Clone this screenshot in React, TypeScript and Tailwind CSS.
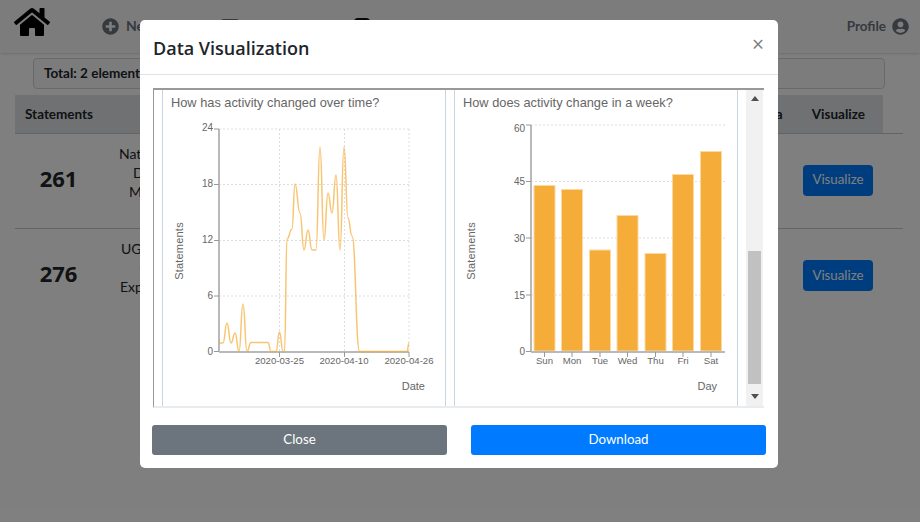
import { FaHome, FaPlusCircle, FaUserCircle } from "react-icons/fa";

const uiFont = "font-['Lato','Open_Sans',sans-serif]";
const titleFont = "font-['Open_Sans','Noto_Sans',sans-serif]";

const linePoints = [
  [219, 342], [223, 342], [227, 322], [231, 342], [235, 332], [239, 350.5], [243, 303], [247, 350.5],
  [251, 341.5], [268, 341.5], [271, 350.5], [276, 350.5], [279.5, 331], [283, 350.5], [284.5, 350.5],
  [287, 238], [292, 228], [295, 183], [300, 212], [304, 249], [308, 229], [312, 249], [316, 249],
  [320, 146], [324, 239], [328, 192], [332, 212], [336, 174], [340, 249], [344, 146], [348, 217],
  [352, 235], [359.5, 350.5], [407, 350.5], [409, 342],
];

// rounded peaks, control points sit halfway between neighbours
const linePath = linePoints.reduce((d, [x, y], i) => {
  if (i === 0) return `M${x} ${y}`;
  const [px, py] = linePoints[i - 1];
  const mid = (x - px) / 2;
  return `${d}C${px + mid} ${py} ${x - mid} ${y} ${x} ${y}`;
}, "");

const bars = [
  { day: "Sun", x: 534, top: 184.5 },
  { day: "Mon", x: 561.5, top: 188.5 },
  { day: "Tue", x: 589.5, top: 249 },
  { day: "Wed", x: 617, top: 214.5 },
  { day: "Thu", x: 645, top: 252.5 },
  { day: "Fri", x: 672.5, top: 173.5 },
  { day: "Sat", x: 700.5, top: 150.5 },
];

function ChartLabel({ x, y, children, anchor = "middle", size = 9.6 }: { x: number; y: number; children: string; anchor?: "middle" | "end" | "start"; size?: number }) {
  return (
    <text x={x} y={y} textAnchor={anchor} fontSize={size} fill="#666">
      {children}
    </text>
  );
}

function YLabel({ x }: { x: number }) {
  return (
    <text transform={`translate(${x} 250) rotate(-90)`} textAnchor="middle" fontSize={11} letterSpacing={0.2} fill="#666">
      Statements
    </text>
  );
}

function LineChart() {
  return (
    <svg viewBox="163 118 282 289" className="block h-[289px] w-[282px]">
      {[128, 183.5, 239.5, 295].map((y) => (
        <line key={y} x1={219} x2={409} y1={y} y2={y} stroke="#ddd" strokeDasharray="2 2" />
      ))}
      {[279.5, 344.5, 409].map((x) => (
        <line key={x} x1={x} x2={x} y1={128} y2={350} stroke="#ddd" strokeDasharray="2 2" />
      ))}
      <path d="M219 128V351M219 351H409" fill="none" stroke="#b9b9b9" strokeWidth={2} />
      {[128, 183.5, 239.5, 295, 350.5].map((y) => (
        <line key={y} x1={214} x2={219} y1={y} y2={y} stroke="#999" />
      ))}
      {[279.5, 344.5, 409].map((x) => (
        <line key={x} x1={x} x2={x} y1={351} y2={356} stroke="#999" />
      ))}
      <path d={linePath} fill="none" stroke="#f5ac38" strokeOpacity={0.7} strokeWidth={1.5} />
      <ChartLabel x={213} y={129.5} anchor="end" size={10}>24</ChartLabel>
      <ChartLabel x={213} y={186} anchor="end" size={10}>18</ChartLabel>
      <ChartLabel x={213} y={242} anchor="end" size={10}>12</ChartLabel>
      <ChartLabel x={213} y={298} anchor="end" size={10}>6</ChartLabel>
      <ChartLabel x={213} y={353.5} anchor="end" size={10}>0</ChartLabel>
      <ChartLabel x={279.5} y={363}>2020-03-25</ChartLabel>
      <ChartLabel x={344} y={363}>2020-04-10</ChartLabel>
      <ChartLabel x={409} y={363}>2020-04-26</ChartLabel>
      <ChartLabel x={425} y={389} anchor="end" size={11}>Date</ChartLabel>
      <YLabel x={183} />
    </svg>
  );
}

function BarChart() {
  return (
    <svg viewBox="455 118 282 289" className="block h-[289px] w-[282px]">
      {[124, 180.5, 237, 294].map((y) => (
        <line key={y} x1={531} x2={726} y1={y} y2={y} stroke="#ddd" strokeDasharray="2 2" />
      ))}
      {bars.map((b) => (
        <rect key={b.day} x={b.x} y={b.top} width={21} height={350 - b.top} fill="#f5ac38" stroke="#fbd9a3" />
      ))}
      <path d="M531 124V351M531 351H725" fill="none" stroke="#b9b9b9" strokeWidth={2} />
      {[124, 180.5, 237, 294, 350.5].map((y) => (
        <line key={y} x1={526} x2={531} y1={y} y2={y} stroke="#999" />
      ))}
      {bars.map((b) => (
        <line key={b.day} x1={b.x + 10.5} x2={b.x + 10.5} y1={351} y2={356} stroke="#999" />
      ))}
      <ChartLabel x={525} y={130.5} anchor="end" size={10}>60</ChartLabel>
      <ChartLabel x={525} y={184} anchor="end" size={10}>45</ChartLabel>
      <ChartLabel x={525} y={240.5} anchor="end" size={10}>30</ChartLabel>
      <ChartLabel x={525} y={297.5} anchor="end" size={10}>15</ChartLabel>
      <ChartLabel x={525} y={353.5} anchor="end" size={10}>0</ChartLabel>
      {bars.map((b) => (
        <ChartLabel key={b.day} x={b.x + 10.5} y={363}>{b.day}</ChartLabel>
      ))}
      <ChartLabel x={717} y={389} anchor="end" size={11}>Day</ChartLabel>
      <YLabel x={475} />
    </svg>
  );
}

function ChartPanel({ title, children }: { title: string; children: React.ReactNode }) {
  return (
    <div className="h-full w-[284px] shrink-0 overflow-hidden border-x border-[#c9d6df] font-['Liberation_Sans',sans-serif]">
      <p className="h-[29px] pl-2 pt-[5px] text-[12.8px] leading-4 text-[#666]">{title}</p>
      {children}
    </div>
  );
}

function Row({ count, lines, last }: { count: string; lines: { text: string; pad: string }[]; last?: boolean }) {
  return (
    <div className={last ? "flex h-[95px] items-center" : "flex h-[95px] items-center border-b border-[#c6c8ca]"}>
      <div className={`mb-[6px] w-[87px] text-center text-[22px] font-bold text-[#212529] ${titleFont}`}>{count}</div>
      <div className="ml-[17px] flex flex-col gap-[1px] self-start pt-[11px] text-sm leading-[18px] text-[#212529]">
        {lines.map((l) => (
          <p key={l.text} className={l.pad}>{l.text}</p>
        ))}
      </div>
      <button className="mb-[2px] ml-auto mr-[30px] h-[31px] w-[70px] rounded bg-[#007bff] text-[13.3px] text-white">Visualize</button>
    </div>
  );
}

export default function App() {
  return (
    <div className={`relative h-[522px] w-[920px] overflow-hidden bg-white ${uiFont}`}>
      <nav className="flex h-[53px] items-start bg-[#f8f9fa] text-[#6c757d] shadow-sm">
        <FaHome className="ml-[14px] mt-[6px] h-[32px] w-[36px] text-black" />
        <FaPlusCircle className="ml-[52px] mt-[18px] h-[17px] w-[17px]" />
        <span className="ml-[7px] mt-[16px] w-[30px] text-sm font-bold">New</span>
        <div className="ml-[64px] mt-[19px] h-4 w-5 rounded-sm bg-[#6c757d]" />
        <div className="ml-[114px] mt-[18px] h-4 w-4 rounded-sm bg-[#111]" />
        <span className="ml-auto mt-[16px] text-[13.5px] font-bold">Profile</span>
        <FaUserCircle className="ml-[6px] mr-[11px] mt-[18px] h-[17px] w-[17px]" />
      </nav>
      <div className="ml-[33px] mt-[5px] flex h-[31px] w-[852px] items-center rounded border border-[#ced4da] bg-[#f8f9fa] px-[10px] text-[13.5px] font-bold text-[#212529]">
        Total: 2 elements
      </div>
      <div className="ml-[15px] mr-[17px] mt-[6px]">
        <div className="border-b border-[#c6c8ca]">
          <div className="mr-[20px] flex h-[38px] items-center bg-[#dee2e6] pl-[10px] pr-[18px] text-[13.5px] font-bold text-[#212529]">
            <span>Statements</span>
            <span className="ml-auto">Data</span>
            <span className="ml-[29px]">Visualize</span>
          </div>
        </div>
        <Row
          count="261"
          lines={[
            { text: "Nat", pad: "pl-0" },
            { text: "D", pad: "pl-[14px]" },
            { text: "M", pad: "pl-[10px]" },
          ]}
        />
        <Row
          count="276"
          last
          lines={[
            { text: "UGI", pad: "pl-[2px]" },
            { text: "-", pad: "pl-[20px]" },
            { text: "Exp", pad: "pl-px" },
          ]}
        />
      </div>

      <div className="absolute inset-0 bg-black/50">
        <div className="ml-[140px] mt-[20px] flex h-[448px] w-[638px] flex-col rounded-[5px] bg-white">
          <div className={`flex h-[55px] shrink-0 items-start justify-between border-b border-[#dee2e6] px-[13px] ${titleFont}`}>
            <h5 className="mt-[13px] text-[18px] font-semibold leading-[30px] text-[#212529]">Data Visualization</h5>
            <span className="mr-px mt-[10px] text-[21px] leading-7 text-[#808080]">×</span>
          </div>
          <div className="ml-[13px] mt-[13px] flex h-[320px] w-[611px] border-b-2 border-l border-t-2 border-[#999] border-b-[#e9ecef] pl-2">
            <div className="flex gap-2">
              <ChartPanel title="How has activity changed over time?">
                <LineChart />
              </ChartPanel>
              <ChartPanel title="How does activity change in a week?">
                <BarChart />
              </ChartPanel>
            </div>
            <div className="ml-2 flex h-full w-[17px] flex-col items-center bg-[#f1f1f1]">
              <svg viewBox="0 0 10 6" className="mt-[6px] h-[5px] w-2 shrink-0">
                <path d="M5 0 10 6H0Z" fill="#505050" />
              </svg>
              <div className="mt-[150px] h-[133px] w-[13px] bg-[#c1c1c1]" />
              <svg viewBox="0 0 10 6" className="mt-[10px] h-[5px] w-2 shrink-0">
                <path d="M0 0H10L5 6Z" fill="#505050" />
              </svg>
            </div>
          </div>
          <div className="ml-[12px] mt-[17px] flex w-[614px] justify-between">
            <button className="h-[30px] w-[295px] rounded-[3px] bg-[#6c757d] text-[13.3px] text-white">Close</button>
            <button className="h-[30px] w-[295px] rounded-[3px] bg-[#007bff] text-[13.3px] text-white">Download</button>
          </div>
        </div>
      </div>
    </div>
  );
}
